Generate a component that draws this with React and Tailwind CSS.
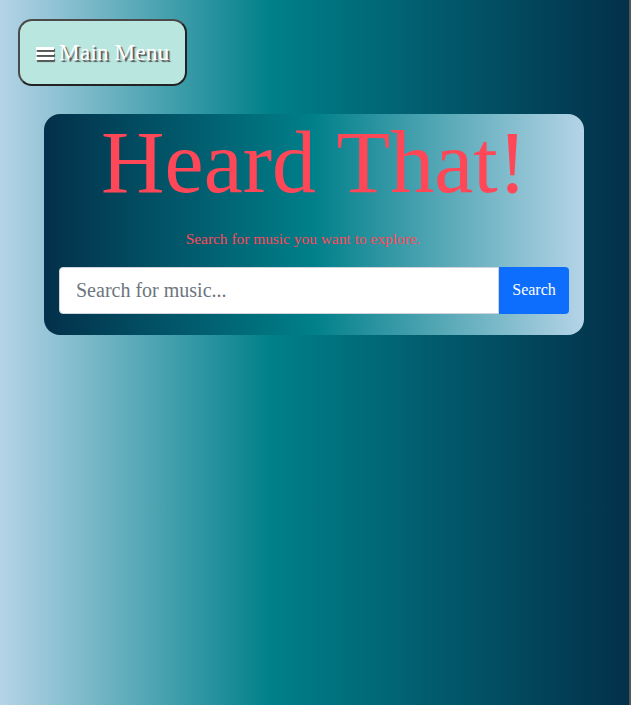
export default function App() {
  return (
    <div className="flex min-h-[705px] w-full" style={{ fontFamily: '"Liberation Serif", "Times New Roman", serif' }}>
      <div className="flex-1 min-h-[705px] bg-[linear-gradient(to_right,#b5d4e7_0%,#00808a_43%,#03304a_100%)] pt-[19px]">
        <div className="pl-[18px]">
          <button className="flex h-[67px] w-[169px] items-center justify-center gap-[5px] rounded-[14px] border-2 border-[#4a4a4a] border-b-[#222] border-r-[#222] bg-[#bae6e0] text-[23.5px] text-white [text-shadow:2px_2px_1px_#555]">
            <span className="flex flex-col gap-[2px] pt-[1px]">
              <span className="block h-[3px] w-[18px] bg-white shadow-[1px_2px_1px_#555]"></span>
              <span className="block h-[3px] w-[18px] bg-white shadow-[1px_2px_1px_#555]"></span>
              <span className="block h-[3px] w-[18px] bg-white shadow-[1px_2px_1px_#555]"></span>
            </span>
            <span>Main Menu</span>
          </button>
        </div>
        <div className="ml-[44px] mt-[28px] w-[540px] rounded-[16px] bg-[linear-gradient(to_right,#03304a_0%,#00808a_50%,#b5d4e7_100%)] px-[15px] pt-[1px] pb-[21px]">
          <h1 className="text-center text-[88px] leading-[1.1] text-[#ff4757]">Heard That!</h1>
          <p className="mt-[15px] pr-[22px] text-center text-[15.4px] text-[#ff4757]">Search for music you want to explore.</p>
          <div className="mt-[17px] flex h-[47px]">
            <input
              type="text"
              placeholder="Search for music..."
              className="h-full flex-1 rounded-l-[4px] border border-[#ced4da] bg-white px-[16px] text-[20px] text-[#212529] placeholder:text-[#6c757d] outline-none"
              style={{ fontFamily: '"Liberation Serif", "Times New Roman", serif' }}
            />
            <button className="h-full w-[70px] rounded-r-[4px] bg-[#0d6efd] text-[16px] text-white" style={{ fontFamily: '"Liberation Serif", "Times New Roman", serif' }}>
              Search
            </button>
          </div>
        </div>
      </div>
      <div className="w-[2px] min-h-[705px] bg-[#555]"></div>
    </div>
  );
}
